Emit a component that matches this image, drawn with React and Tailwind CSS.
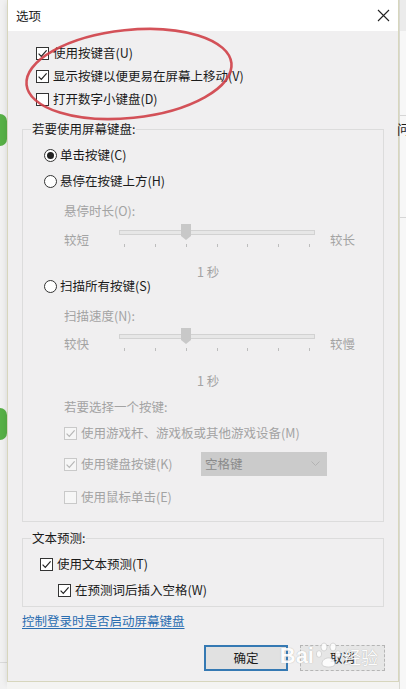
import React from "react";

const Check = ({ checked, disabled }) => (
  <span
    className={
      disabled
        ? "w-[13px] h-[13px] shrink-0 border border-[#c9c9c9] bg-[#f6f6f6] flex items-center justify-center"
        : "w-[13px] h-[13px] shrink-0 border border-[#333333] bg-white flex items-center justify-center"
    }
  >
    {checked && (
      <svg width="11" height="11" viewBox="0 0 11 11">
        <path
          d="M1.6 5.6 L4.3 8.3 L9.6 2.4"
          fill="none"
          stroke={disabled ? "#b6b6b6" : "#222222"}
          strokeWidth="1.2"
        />
      </svg>
    )}
  </span>
);

const Radio = ({ checked }) => (
  <span className="w-[13px] h-[13px] shrink-0 rounded-full border border-[#333333] bg-white flex items-center justify-center">
    {checked && <span className="w-[7px] h-[7px] rounded-full bg-[#222222]" />}
  </span>
);

const Slider = () => {
  const ticks = [5, 36, 67, 98, 128, 159, 190];
  return (
    <svg width="196" height="26" viewBox="0 0 196 26" className="shrink-0">
      <rect x="0.5" y="7.5" width="195" height="4" fill="#e7e7e7" stroke="#d2d2d2" />
      {ticks.map((t) => (
        <line key={t} x1={t + 0.5} y1="21" x2={t + 0.5} y2="24" stroke="#bdbdbd" />
      ))}
      <path d="M62 1 H72 V13 L67 17 L62 13 Z" fill="#c8c8c8" />
    </svg>
  );
};

const SliderRow = ({ left, right, mt }) => (
  <div className={`flex items-start pl-[41px] ${mt}`}>
    <span className="w-[55px] mt-[8px] leading-[18px] text-[#a3a3a3]">{left}</span>
    <Slider />
    <span className="ml-[15px] mt-[8px] leading-[18px] text-[#a3a3a3]">{right}</span>
  </div>
);

const App = () => {
  return (
    <div
      className="relative w-[406px] h-[689px] overflow-hidden flex bg-[#f3f3f3] text-[12.5px] text-[#1b1b1b]"
      style={{ fontFamily: '"Noto Sans CJK SC", "Noto Sans", sans-serif' }}
    >
      {/* left strip of the window behind */}
      <div className="w-[7px] shrink-0 flex flex-col bg-[#f1f1f1]">
        <div className="mt-[114px] w-[14px] h-[32px] -ml-[7px] rounded-full bg-[#57b046]" />
        <div className="mt-[262px] w-[14px] h-[32px] -ml-[7px] rounded-full bg-[#57b046]" />
        <div className="mt-[222px] h-px bg-[#dadada]" />
      </div>

      {/* dialog column */}
      <div className="w-[392px] shrink-0 flex flex-col">
        <div className="h-[682px] flex flex-col border-x border-b border-[#d7d6bd] bg-[#f0eff0] shadow-[0_2px_6px_rgba(0,0,0,0.12)]">
          <div className="h-[31px] shrink-0 bg-white flex items-center justify-between pl-[8px] pr-[8px]">
            <span className="leading-[16px]">选项</span>
            <svg width="13" height="13" viewBox="0 0 13 13">
              <path d="M1 1 L12 12 M12 1 L1 12" stroke="#222222" strokeWidth="1.1" />
            </svg>
          </div>

          <div className="flex flex-col pl-[28px] pt-[14px] gap-[7px]">
            <div className="h-[16px] flex items-center gap-[4px]">
              <Check checked />
              <span>使用按键音(U)</span>
            </div>
            <div className="h-[16px] flex items-center gap-[4px]">
              <Check checked />
              <span>显示按键以便更易在屏幕上移动(V)</span>
            </div>
            <div className="h-[16px] flex items-center gap-[4px]">
              <Check />
              <span>打开数字小键盘(D)</span>
            </div>
          </div>

          <fieldset className="ml-[14px] mt-[14px] w-[362px] border border-[#dcdcdc] pb-[16px]">
            <legend className="ml-[8px] px-[1px] leading-[16px]">若要使用屏幕键盘:</legend>
            <div className="h-[16px] mt-[10px] pl-[21px] flex items-center gap-[3px]">
              <Radio checked />
              <span>单击按键(C)</span>
            </div>
            <div className="h-[16px] mt-[10px] pl-[21px] flex items-center gap-[3px]">
              <Radio />
              <span>悬停在按键上方(H)</span>
            </div>
            <div className="h-[16px] mt-[14px] pl-[41px] flex items-center text-[#a3a3a3]">
              悬停时长(O):
            </div>
            <SliderRow left="较短" right="较长" mt="mt-[4px]" />
            <div className="h-[12px] mt-[17px] pl-[174px] flex items-center text-[#a3a3a3]">
              1 秒
            </div>
            <div className="h-[16px] pl-[21px] flex items-center gap-[3px]">
              <Radio />
              <span>扫描所有按键(S)</span>
            </div>
            <div className="h-[16px] mt-[14px] pl-[41px] flex items-center text-[#a3a3a3]">
              扫描速度(N):
            </div>
            <SliderRow left="较快" right="较慢" mt="mt-[3px]" />
            <div className="h-[12px] mt-[22px] pl-[174px] flex items-center text-[#a3a3a3]">
              1 秒
            </div>
            <div className="h-[16px] mt-[12px] pl-[41px] flex items-center text-[#a3a3a3]">
              若要选择一个按键:
            </div>
            <div className="h-[16px] mt-[10px] pl-[41px] flex items-center gap-[4px] text-[#a3a3a3]">
              <Check checked disabled />
              <span>使用游戏杆、游戏板或其他游戏设备(M)</span>
            </div>
            <div className="h-[24px] mt-[11px] pl-[41px] flex items-center">
              <div className="w-[137px] flex items-center gap-[4px] text-[#a3a3a3]">
                <Check checked disabled />
                <span>使用键盘按键(K)</span>
              </div>
              <div className="w-[126px] h-[24px] bg-[#cbcbcb] flex items-center justify-between pl-[4px] pr-[7px] text-[#8a8a8a]">
                <span>空格键</span>
                <svg width="9" height="6" viewBox="0 0 9 6">
                  <path d="M0.5 0.5 L4.5 4.5 L8.5 0.5" fill="none" stroke="#b3b3b3" />
                </svg>
              </div>
            </div>
            <div className="h-[16px] mt-[13px] pl-[41px] flex items-center gap-[4px] text-[#a3a3a3]">
              <Check disabled />
              <span>使用鼠标单击(E)</span>
            </div>
          </fieldset>

          <fieldset className="ml-[14px] mt-[8px] w-[362px] border border-[#dcdcdc] pb-[8px]">
            <legend className="ml-[8px] px-[1px] leading-[16px]">文本预测:</legend>
            <div className="h-[16px] mt-[10px] pl-[17px] flex items-center gap-[4px]">
              <Check checked />
              <span>使用文本预测(T)</span>
            </div>
            <div className="h-[16px] mt-[10px] pl-[35px] flex items-center gap-[4px]">
              <Check checked />
              <span>在预测词后插入空格(W)</span>
            </div>
          </fieldset>

          <div className="h-[16px] mt-[6px] pl-[14px] flex items-center">
            <span className="text-[#2a6db0] underline underline-offset-2">控制登录时是否启动屏幕键盘</span>
          </div>

          <div className="relative mt-[16px] flex justify-end gap-[12px] pr-[13px]">
            <button className="w-[84px] h-[26px] border-2 border-[#3579b3] bg-[#e1e1e1] flex items-center justify-center">
              确定
            </button>
            <button className="w-[85px] h-[26px] border border-dashed border-[#b5b5b5] bg-[#e6e6e6] flex items-center justify-center">
              取消
            </button>
            <div className="absolute right-[20px] -top-[4px] flex items-end gap-[2px] text-white opacity-90 [text-shadow:0_0_1px_#9a9a9a]">
              <span className="text-[22px] leading-[30px] font-bold" style={{ fontFamily: '"Liberation Sans", sans-serif' }}>
                Bai
              </span>
              <svg width="26" height="28" viewBox="0 0 26 28" className="mb-[2px]">
                <g fill="#ffffff" stroke="#bcbcbc" strokeWidth="0.6">
                  <ellipse cx="8" cy="6" rx="3" ry="4" />
                  <ellipse cx="17" cy="6" rx="3" ry="4" />
                  <ellipse cx="3" cy="13" rx="2.6" ry="3.4" />
                  <ellipse cx="22" cy="13" rx="2.6" ry="3.4" />
                  <path d="M6 23 C6 15 19 15 19 23 C19 27 6 27 6 23 Z" />
                </g>
              </svg>
              <span className="text-[17px] leading-[28px]">经验</span>
            </div>
          </div>
        </div>
        <div className="flex-1 bg-[#f4f4f2]" />
      </div>

      {/* right strip of the window behind */}
      <div className="w-[7px] shrink-0 flex flex-col bg-[#f7f7f7] border-l border-[#d9d9d2]">
        <div className="h-[31px] bg-[#ebebeb]" />
        <div className="mt-[84px] h-px bg-[#d6d6d6]" />
        <span className="mt-[5px] text-[13px] leading-[16px] -ml-[3px]">问</span>
        <div className="mt-[80px] h-px bg-[#d6d6d6]" />
      </div>

      {/* red hand-drawn ellipse */}
      <svg className="absolute left-0 top-0 pointer-events-none" width="406" height="689">
        <ellipse
          cx="129"
          cy="74"
          rx="103"
          ry="44"
          transform="rotate(-6 129 74)"
          fill="none"
          stroke="#cf3f47"
          strokeWidth="2.6"
          opacity="0.9"
        />
      </svg>
    </div>
  );
};

export default App;
